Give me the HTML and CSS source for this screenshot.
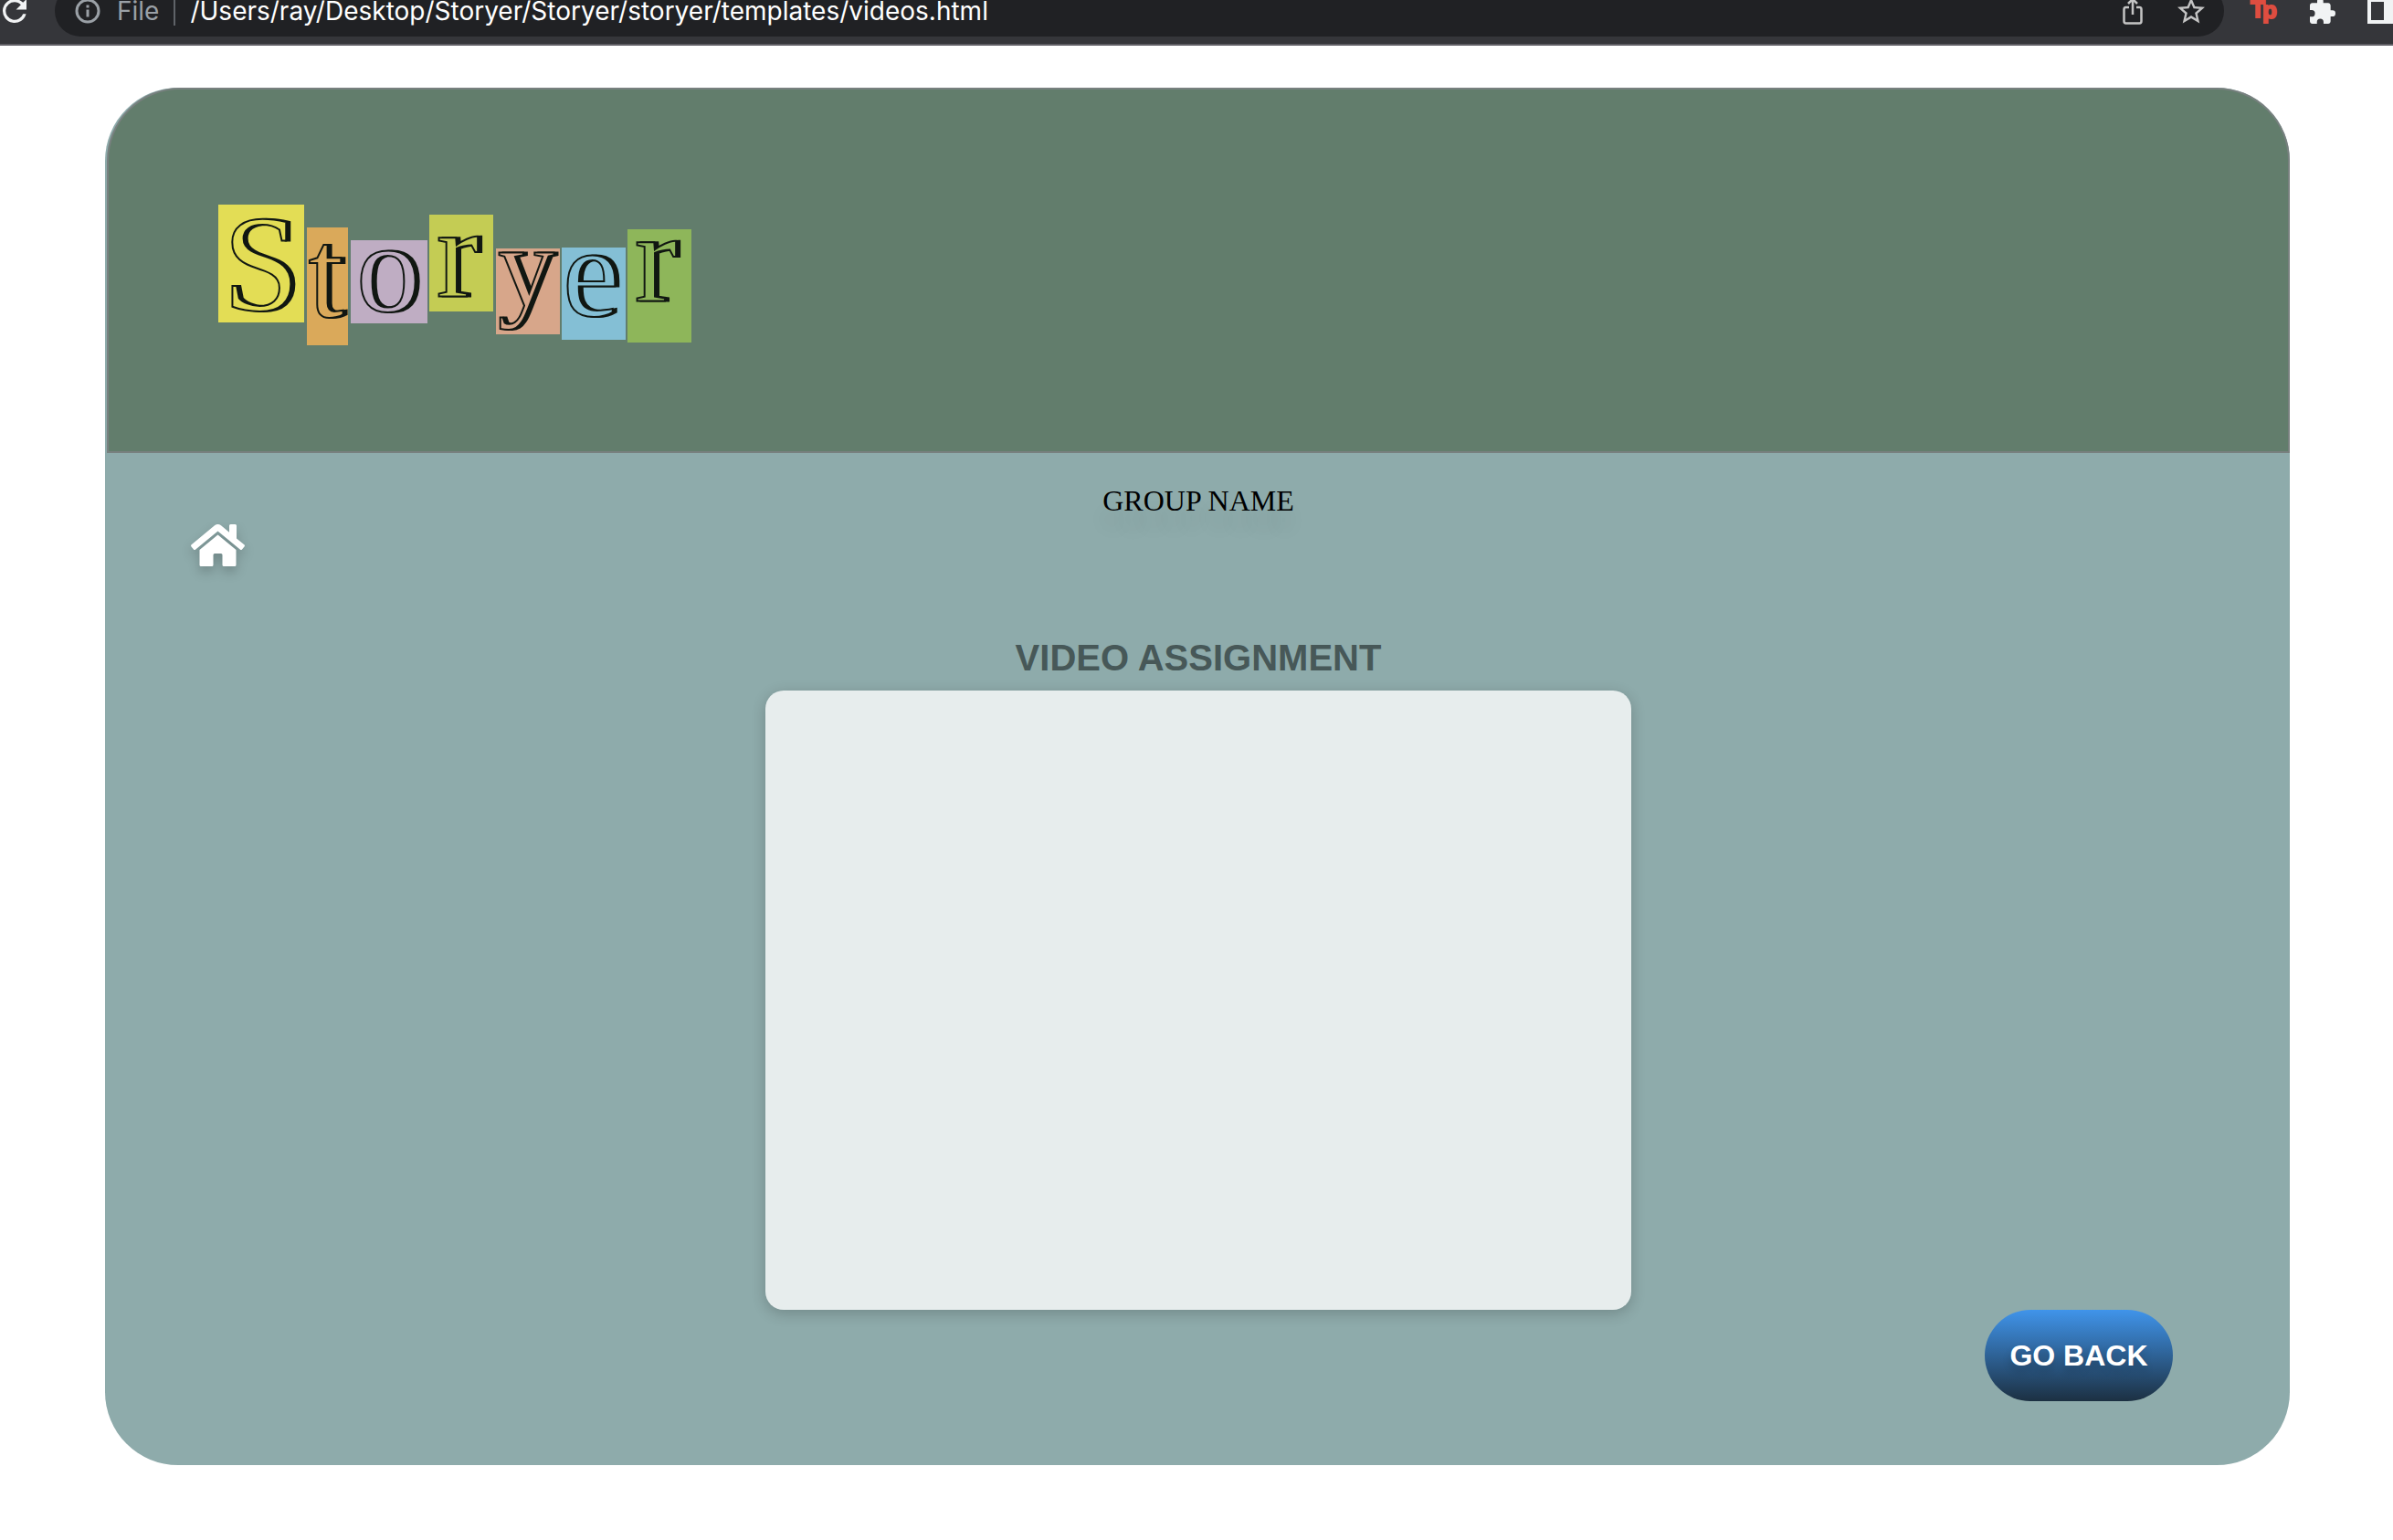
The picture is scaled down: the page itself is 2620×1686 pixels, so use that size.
FILE: index.html
```html
<!DOCTYPE html>
<html lang="en">
<head>
<meta charset="utf-8">
<title>Storyer - Videos</title>
<link rel="stylesheet" href="styles.css">
</head>
<body>
<div class="toolbar">
  <button class="tool" type="button" aria-label="Reload">
    <svg width="26" height="26" viewBox="4 4 16 16" fill="#f1f3f4"><path d="M17.65 6.35A7.96 7.96 0 0 0 12 4a8 8 0 1 0 7.73 10h-2.08A6 6 0 1 1 12 6c1.66 0 3.14.69 4.22 1.78L13 11h7V4z"/></svg>
  </button>
  <div class="address">
    <svg width="28" height="28" viewBox="0 0 28 28" fill="none" stroke="#9aa0a6"><circle cx="14" cy="14" r="12" stroke-width="3"/><path d="M14 12.500v8M14 7.500v3" stroke-width="3"/></svg>
    <span class="scheme">File</span>
    <span class="url">/Users/ray/Desktop/Storyer/Storyer/storyer/templates/videos.html</span>
    <button class="tool share" type="button" aria-label="Share">
      <svg width="22" height="32" viewBox="0 0 22 32" fill="none" stroke="#c4c4c4" stroke-width="2.500"><path d="M7 12H3.500Q1.500 12 1.500 14.500V27Q1.500 29.500 3.500 29.500H18.500Q20.500 29.500 20.500 27V14.500Q20.500 12 18.500 12H15M11 20V3M6 8l5-5 5 5"/></svg>
    </button>
    <button class="tool" type="button" aria-label="Bookmark">
      <svg width="30" height="30" viewBox="2 2 20 20" fill="#c4c4c4"><path d="M22 9.240l-7.190-.62L12 2 9.190 8.630 2 9.240l5.460 4.730L5.820 21 12 17.270 18.180 21l-1.630-7.030L22 9.240zM12 15.400l-3.760 2.270 1-4.280-3.320-2.880 4.380-.38L12 6.100l1.710 4.040 4.380.38-3.320 2.880 1 4.280L12 15.400z"/></svg>
    </button>
  </div>
  <div class="extensions">
    <button class="tool tp" type="button" aria-label="Tp extension">
      <svg width="30" height="32" viewBox="0 0 30 32"><text x="0" y="23">T</text><text x="13" y="24">p</text></svg>
    </button>
    <button class="tool" type="button" aria-label="Extensions">
      <svg width="28" height="28" viewBox="2 1 21 21" fill="#f1f3f4"><path d="M20.500 11H19V7c0-1.100-.9-2-2-2h-4V3.500a2.500 2.500 0 0 0-5 0V5H4c-1.100 0-2 .9-2 2v3.800h1.500a2.700 2.700 0 0 1 0 5.400H2V20c0 1.100.9 2 2 2h3.800v-1.500a2.700 2.700 0 0 1 5.400 0V22H17c1.100 0 2-.9 2-2v-4h1.500a2.500 2.500 0 0 0 0-5z"/></svg>
    </button>
    <button class="tool" type="button" aria-label="Side panel">
      <svg width="28" height="28" viewBox="0 0 28 28" fill="#f1f3f4"><path fill-rule="evenodd" d="M0 0H28V28H0ZM4 4V24H18V4Z"/></svg>
    </button>
  </div>
</div>

<main class="card">
  <header class="banner">
    <svg class="logo" width="518" height="154" viewBox="0 0 518 154" role="img" aria-label="Storyer">
      <rect x="0" y="0" width="94" height="129" fill="#e3dd55"/>
      <rect x="97" y="25" width="45" height="129" fill="#daa95a"/>
      <rect x="145" y="39" width="84" height="91" fill="#bfadc3"/>
      <rect x="231" y="11" width="70" height="106" fill="#c4cc54"/>
      <rect x="304" y="48" width="70" height="94" fill="#d7a68a"/>
      <rect x="376" y="47" width="70" height="101" fill="#84bfd5"/>
      <rect x="448" y="27" width="70" height="124" fill="#8eb65a"/>
      <g class="letters">
        <text class="big" x="47" y="116" fill="#e3dd55">S</text>
        <text x="118" y="123" fill="#daa95a">t</text>
        <text x="186" y="117" fill="#bfadc3">o</text>
        <text x="262" y="101" fill="#c4cc54">r</text>
        <text class="small" x="337" y="110" fill="#d7a68a">y</text>
        <text x="408" y="122" fill="#84bfd5">e</text>
        <text x="479" y="106" fill="#8eb65a">r</text>
      </g>
    </svg>
  </header>
  <div class="content">
    <a class="home" href="#" aria-label="Home">
      <svg width="59" height="46" viewBox="0 0 59 46" fill="#fff"><path d="M.7 22.300 26 1.300Q29.500-1.300 33 1.300L42 8.800V1.500Q42 0 43.500 0H48.500Q50 0 50 1.500V15.500L58.300 22.300Q59.500 23.400 58.500 24.500L56 27.500Q55 28.500 53.800 27.500L29.500 7.500 5.200 27.500Q4 28.500 3 27.500L.5 24.500Q-.5 23.400.7 22.300Z"/><path d="M29.500 11.500 49.500 28V44.500Q49.500 46 48 46H36Q34.500 46 34.500 44.500V33.500Q34.500 32 33 32H26Q24.500 32 24.500 33.500V44.500Q24.500 46 23 46H11Q9.500 46 9.500 44.500V28Z"/></svg>
    </a>
    <section class="assignment">
      <p class="group">GROUP NAME</p>
      <h1 class="title">VIDEO ASSIGNMENT</h1>
      <div class="video"></div>
    </section>
    <button class="back" type="button">GO BACK</button>
  </div>
</main>
</body>
</html>
```
FILE: styles.css
```css
* {
  box-sizing: border-box;
}

body {
  margin: 0;
  background: #fff;
  font-family: "Liberation Sans", Arial, sans-serif;
}

svg {
  display: block;
  flex: none;
  overflow: visible;
}

.toolbar {
  display: flex;
  align-items: center;
  height: 74px;
  margin-top: -24px;
  padding-left: 3px;
  background: #35363a;
  border-bottom: 2px solid #5f5e64;
}

.tool {
  flex: none;
  padding: 0;
  border: 0;
  background: none;
}

.address {
  display: flex;
  flex: 1;
  align-items: center;
  height: 56px;
  margin-left: 31px;
  padding: 0 21px 0 22px;
  border-radius: 28px;
  background: #202124;
  font: 28px/40px Inter, sans-serif;
  color: #fff;
}

.scheme {
  margin-left: 18px;
  padding-right: 16px;
  border-right: 2px solid #5f6368;
  line-height: 32px;
  color: #9aa0a6;
}

.url {
  margin-left: 16px;
}

.share {
  margin: 0 38px 0 auto;
}

.extensions {
  display: flex;
  align-items: center;
  gap: 35px;
  margin-left: 29px;
}

.tp {
  font: bold 26px "Liberation Sans", sans-serif;
}

.tp text {
  fill: #de4d40;
  stroke: #de4d40;
  stroke-width: 2px;
}

.card {
  margin: 46px 113px 82px 115px;
  padding-left: 2px;
  border-radius: 80px;
  background: #8eabab;
}

.banner {
  padding: 126px 120px 116px;
  border: 2px solid #78807f;
  border-radius: 80px 80px 0 0;
  background: #627d6c;
}

.letters {
  font: 140px "Liberation Serif", serif;
  text-anchor: middle;
  stroke: #111712;
  stroke-width: 2px;
}

.letters text {
  filter: drop-shadow(4px 0 0 #111712);
}

.letters .big {
  font-size: 150px;
}

.letters .small {
  font-size: 124px;
}

.content {
  display: grid;
  grid-template-columns: 1fr minmax(0, 948px) 1fr;
  padding-bottom: 70px;
}

.home {
  justify-self: start;
  align-self: start;
  margin: 78px 0 0 92px;
  filter: drop-shadow(0 6px 6px rgba(0, 0, 0, 0.2));
}

.assignment {
  padding-top: 32px;
  text-align: center;
}

.group {
  margin: 0;
  font: 32px/40px "Liberation Serif", "Times New Roman", serif;
  color: #000;
  text-shadow: 0 20px 20px rgba(0, 0, 0, 0.1);
}

.title {
  margin: 128px 0 12px;
  font-size: 40px;
  line-height: 48px;
  color: #475858;
}

.video {
  height: 678px;
  border-radius: 20px;
  background: #e7eded;
  box-shadow: 0 4px 16px rgba(0, 0, 0, 0.2);
}

.back {
  grid-area: 2 / 3;
  justify-self: end;
  width: 206px;
  height: 100px;
  margin-right: 128px;
  padding: 0;
  border: 0;
  border-radius: 50px;
  background: linear-gradient(#4094ea, #1c3042);
  font: bold 32px/40px "Liberation Sans", Arial, sans-serif;
  color: #fff;
  text-shadow: 0 6px 10px rgba(0, 0, 0, 0.2);
}
```
